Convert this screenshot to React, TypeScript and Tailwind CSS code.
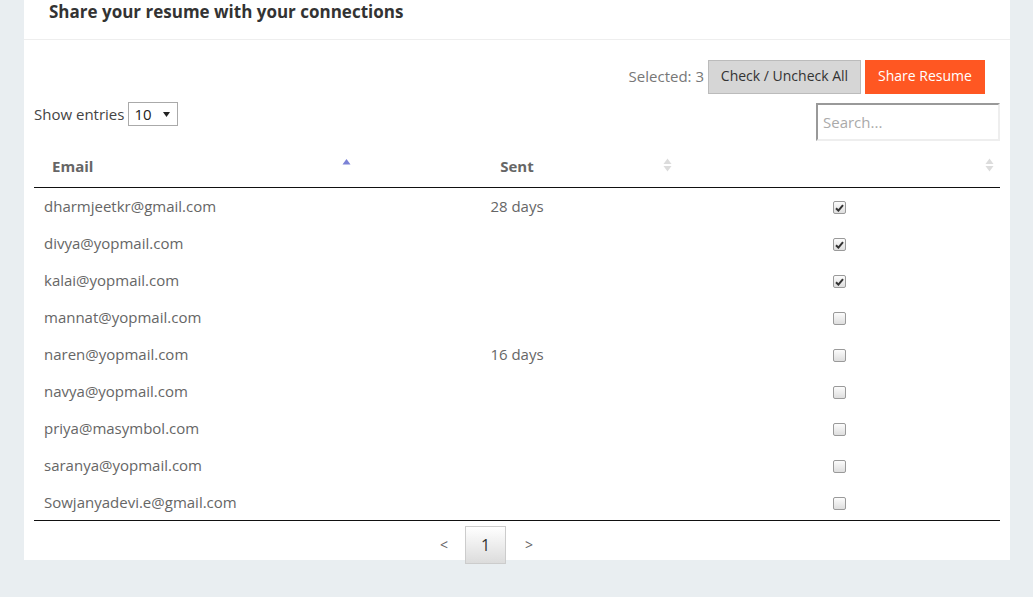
import { useState } from "react";

type Row = { email: string; sent: string; checked: boolean };

const initialRows: Row[] = [
  { email: "dharmjeetkr@gmail.com", sent: "28 days", checked: true },
  { email: "divya@yopmail.com", sent: "", checked: true },
  { email: "kalai@yopmail.com", sent: "", checked: true },
  { email: "mannat@yopmail.com", sent: "", checked: false },
  { email: "naren@yopmail.com", sent: "16 days", checked: false },
  { email: "navya@yopmail.com", sent: "", checked: false },
  { email: "priya@masymbol.com", sent: "", checked: false },
  { email: "saranya@yopmail.com", sent: "", checked: false },
  { email: "Sowjanyadevi.e@gmail.com", sent: "", checked: false },
];

function SortIcon({ active }: { active?: boolean }) {
  if (active) {
    return (
      <svg width="9" height="14" viewBox="0 0 9 14" className="absolute right-[5px] top-1/2 -translate-y-1/2 mt-[1px]">
        <path d="M0.5 6.5 L4.5 1 L8.5 6.5 Z" fill="#7b82d6" />
      </svg>
    );
  }
  return (
    <svg width="9" height="14" viewBox="0 0 9 14" className="absolute right-[6px] top-1/2 -translate-y-1/2 mt-[1px]">
      <path d="M0.5 6 L4.5 0.5 L8.5 6 Z" fill="#dcdcdc" />
      <path d="M0.5 8 L4.5 13.5 L8.5 8 Z" fill="#dcdcdc" />
    </svg>
  );
}

function Check({ on, onClick }: { on: boolean; onClick: () => void }) {
  return (
    <span
      onClick={onClick}
      className="mx-auto flex h-[13px] w-[13px] cursor-pointer items-center justify-center rounded-[2px] border border-[#9a9a9a] bg-gradient-to-b from-[#fcfcfc] to-[#dedede]"
    >
      {on && (
        <svg width="9" height="8" viewBox="0 0 9 8">
          <path d="M1 4.2 L3.4 6.6 L8 1.2" stroke="#333" strokeWidth="2" fill="none" />
        </svg>
      )}
    </span>
  );
}

export default function App() {
  const [rows, setRows] = useState(initialRows);
  const selected = rows.filter((r) => r.checked).length;

  const toggle = (i: number) =>
    setRows((rs) => rs.map((r, j) => (j === i ? { ...r, checked: !r.checked } : r)));
  const toggleAll = () => {
    const all = rows.every((r) => r.checked);
    setRows((rs) => rs.map((r) => ({ ...r, checked: !all })));
  };

  return (
    <div className="min-h-[597px] bg-[#e9eef1] font-['Open_Sans',sans-serif]">
      <div className="ml-[24px] h-[560px] w-[986px] bg-white">
        {/* header */}
        <div className="h-[40px] border-b border-[#eeeeee] pl-[25px]">
          <h1 className="text-[17px] font-bold leading-[24px] text-[#333]">
            Share your resume with your connections
          </h1>
        </div>

        <div className="px-[10px]">
          {/* actions */}
          <div className="mt-[20px] flex items-center justify-end gap-[4px] pr-[15px] leading-[20px]">
            <span className="-mt-[3px] text-[15px] text-[#777]">Selected: {selected}</span>
            <button
              onClick={toggleAll}
              className="h-[34px] w-[153px] border border-[#bbbbbb] bg-[#d6d6d6] pb-[2px] text-[14px] text-[#333]"
            >
              Check / Uncheck All
            </button>
            <button className="h-[34px] w-[120px] bg-[#ff5722] pb-[2px] text-[14px] text-white">
              Share Resume
            </button>
          </div>

          {/* show entries + search */}
          <div className="mt-[8px] flex items-start justify-between">
            <div className="flex items-center text-[15px] text-[#444]">
              <span>Show entries</span>
              <span className="relative ml-[4px] flex h-[24px] w-[50px] items-center border border-[#aaa] pl-[5px] text-[15px] text-[#222]">
                10
                <svg width="7" height="5" viewBox="0 0 7 5" className="absolute right-[7px] top-[9px]">
                  <path d="M0 0 L7 0 L3.5 5 Z" fill="#222" />
                </svg>
              </span>
            </div>
            <input
              placeholder="Search..."
              className="mt-[1px] h-[38px] w-[184px] border-2 border-b-[#eeeeee] border-l-[#999] border-r-[#eeeeee] border-t-[#999] px-[5px] text-[15px] text-[#555] outline-none placeholder:text-[#aaa]"
            />
          </div>

          {/* table */}
          <table className="w-full table-fixed border-collapse">
            <thead>
              <tr className="border-b border-[#111]">
                <th className="relative h-[46px] pl-[18px] pt-[5px] text-left text-[15px] font-bold text-[#666]">
                  Email
                  <SortIcon active />
                </th>
                <th className="relative h-[46px] pt-[5px] text-center text-[15px] font-bold text-[#666]">
                  Sent
                  <SortIcon />
                </th>
                <th className="relative h-[46px] pt-[5px]">
                  <SortIcon />
                </th>
              </tr>
            </thead>
            <tbody className="border-b border-[#111]">
              {rows.map((r, i) => (
                <tr key={r.email}>
                  <td className="h-[37px] pl-[10px] pt-[1px] text-[15px] text-[#666]">{r.email}</td>
                  <td className="h-[37px] pt-[1px] text-center text-[15px] text-[#666]">{r.sent}</td>
                  <td className="h-[37px] pt-[4px]">
                    <Check on={r.checked} onClick={() => toggle(i)} />
                  </td>
                </tr>
              ))}
            </tbody>
          </table>

          {/* pagination */}
          <div className="ml-[402px] mt-[5px] flex items-center text-[14px] text-[#666]">
            <span className="w-[16px] text-center">&lt;</span>
            <span className="ml-[13px] flex h-[38px] w-[41px] items-center justify-center border border-[#cccccc] bg-gradient-to-b from-white to-[#dcdcdc] text-[16px] text-[#333]">
              1
            </span>
            <span className="ml-[15px] w-[16px] text-center">&gt;</span>
          </div>
        </div>
      </div>
    </div>
  );
}
